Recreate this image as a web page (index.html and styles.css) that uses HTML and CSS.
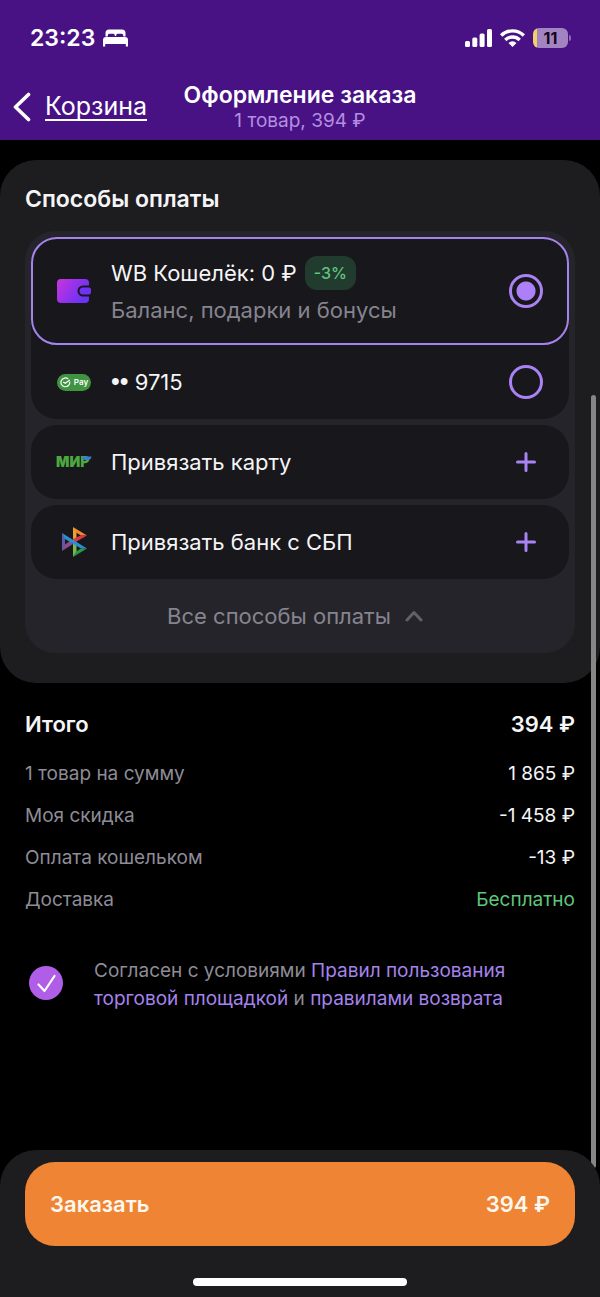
FILE: index.html
```html
<!DOCTYPE html>
<html lang="ru">
<head>
<meta charset="utf-8">
<meta name="viewport" content="width=device-width, initial-scale=1">
<title>Оформление заказа</title>
<link rel="stylesheet" href="styles.css">
</head>
<body>
<div class="screen">
  <header class="header">
    <div class="status">
      <div class="status-left">
        <span>23:23</span>
        <svg width="25" height="18" viewBox="0 0 25 18" fill="#fff" aria-hidden="true">
          <path d="M2.500 7.500V4A3.500 3.500 0 0 1 6 .5h13A3.500 3.500 0 0 1 22.500 4v3.500h-2.300V6.300a1.500 1.500 0 0 0-1.500-1.500h-4a1.500 1.500 0 0 0-1.500 1.500v.7h-1.400v-.7a1.500 1.500 0 0 0-1.500-1.500h-4a1.500 1.500 0 0 0-1.500 1.500v1.200z"/>
          <path d="M3 8h19a3 3 0 0 1 3 3v6.500h-2.200V15H2.200v2.500H0V11a3 3 0 0 1 3-3z"/>
        </svg>
      </div>
      <div class="status-right">
        <svg width="27" height="18" viewBox="0 0 27 18" fill="#fff" aria-hidden="true">
          <rect x="0" y="12" width="5" height="6" rx="1.500"/><rect x="7.300" y="8.500" width="5" height="9.500" rx="1.500"/><rect x="14.600" y="4.500" width="5" height="13.500" rx="1.500"/><rect x="22" y="0" width="5" height="18" rx="1.500"/>
        </svg>
        <svg width="25" height="18" viewBox="0 0 25 18" aria-hidden="true">
          <g fill="none" stroke="#fff" stroke-width="3.400"><path d="M1.200 6.500a16 16 0 0 1 22.600 0"/><path d="M5.300 11a10.200 10.200 0 0 1 14.400 0"/></g>
          <path fill="#fff" d="M12.500 18l-4-4a5.700 5.700 0 0 1 8 0z"/>
        </svg>
        <span class="battery">11</span>
      </div>
    </div>
    <nav class="nav">
      <a class="back" href="#">
        <svg width="18" height="30" viewBox="0 0 18 30" fill="none" stroke="#fff" stroke-width="3.600" stroke-linecap="round" stroke-linejoin="round" aria-hidden="true"><path d="M15.500 2.500 2.500 15l13 12.500"/></svg>
        <span>Корзина</span>
      </a>
      <div class="nav-title">
        <h1>Оформление заказа</h1>
        <p>1 товар, 394 ₽</p>
      </div>
    </nav>
  </header>

  <main class="content">
    <section class="payment">
      <h2>Способы оплаты</h2>
      <div class="methods">
        <div class="card">
          <label class="row row-selected">
            <span class="row-icon">
              <svg width="36" height="26" viewBox="0 0 36 26" aria-hidden="true">
                <defs><linearGradient id="wallet" x1="0" y1="0" x2="1" y2=".5"><stop offset="0" stop-color="#c936dc"/><stop offset=".5" stop-color="#9a32ea"/><stop offset="1" stop-color="#6a32f5"/></linearGradient></defs>
                <rect x="1" y="1" width="32" height="24" rx="4" fill="url(#wallet)"/>
                <path d="M36 7.500H27a5.500 5.500 0 0 0 0 11h9z" fill="#18171c"/>
                <path d="M33 9.500h-6a3.500 3.500 0 0 0 0 7h6a2 2 0 0 0 2-2v-3a2 2 0 0 0-2-2z" fill="#6f32f4"/>
              </svg>
            </span>
            <span class="row-text">
              <span class="row-title">WB Кошелёк: 0 ₽ <span class="badge">-3%</span></span>
              <span class="row-note">Баланс, подарки и бонусы</span>
            </span>
            <input class="radio" type="radio" name="method" checked>
          </label>
          <label class="row">
            <span class="row-icon">
              <span class="pay">
                <svg width="11" height="11" viewBox="0 0 11 11" fill="none" stroke="#fff" stroke-width="1.200" aria-hidden="true"><path d="M9.700 4.700A4.400 4.400 0 1 1 8.300 2.100"/><path d="M3.200 4.900 5.300 6.300 9.800 3"/></svg>
                Pay
              </span>
            </span>
            <span class="row-text"><span class="dots">••</span> 9715</span>
            <input class="radio" type="radio" name="method">
          </label>
        </div>
        <button class="card row" type="button">
          <span class="row-icon">
            <svg width="36" height="20" viewBox="0 0 36 20" aria-hidden="true">
              <text class="mir" x="0" y="15" fill="#4da83f">МИР</text>
              <path d="M26 4.500h9.500a4 4 0 0 1-4 3.500H29a3.500 3.500 0 0 1-3-3.500z" fill="#3b7fd4"/>
            </svg>
          </span>
          <span class="row-text">Привязать карту</span>
          <svg class="plus" width="34" height="34" viewBox="0 0 34 34" aria-hidden="true"><path d="M17 8.500v17M8.500 17h17"/></svg>
        </button>
        <button class="card row" type="button">
          <span class="row-icon">
            <svg width="26" height="32" viewBox="0 0 26 32" aria-hidden="true">
              <path d="M1 7l3 5v8l-3 5z" fill="#6357a5"/>
              <path d="M1 25l11-7-3-3-5 3.500z" fill="#8d4b90"/>
              <path d="M12 1l3.500 4.500V15L12 17z" fill="#efa12e"/>
              <path d="M12 1l14 8.500h-6l-5-3z" fill="#f08a28"/>
              <path d="M26 9.500L12 17.500V13l8-3.800z" fill="#d63a48"/>
              <path d="M12 14l3.500 3v9L12 31z" fill="#79b94a"/>
              <path d="M12 31l14-8.500h-6l-5 3z" fill="#2f9646"/>
              <path d="M1 7l25 15.500h-6L4 13z" fill="#2a8fd0"/>
            </svg>
          </span>
          <span class="row-text">Привязать банк с СБП</span>
          <svg class="plus" width="34" height="34" viewBox="0 0 34 34" aria-hidden="true"><path d="M17 8.500v17M8.500 17h17"/></svg>
        </button>
        <button class="toggle" type="button">
          Все способы оплаты
          <svg width="18" height="12" viewBox="0 0 18 12" fill="none" stroke="#626169" stroke-width="3" stroke-linecap="round" stroke-linejoin="round" aria-hidden="true"><path d="M2 10l7-7.500L16 10"/></svg>
        </button>
      </div>
    </section>

    <section class="totals">
      <h2 class="total"><span>Итого</span><span>394 ₽</span></h2>
      <dl class="lines">
        <div><dt>1 товар на сумму</dt><dd>1&nbsp;865 ₽</dd></div>
        <div><dt>Моя скидка</dt><dd>-1&nbsp;458 ₽</dd></div>
        <div><dt>Оплата кошельком</dt><dd>-13 ₽</dd></div>
        <div><dt>Доставка</dt><dd class="free">Бесплатно</dd></div>
      </dl>
    </section>

    <div class="consent">
      <span class="check">
        <input id="consent" type="checkbox" checked>
        <svg width="34" height="34" viewBox="0 0 34 34" fill="none" stroke="#fff" stroke-width="2.200" stroke-linecap="round" stroke-linejoin="round" aria-hidden="true"><path d="M9.500 18.500l6 6.500 10-15"/></svg>
      </span>
      <label for="consent">Согласен с условиями <a href="#">Правил пользования торговой площадкой</a> и <a href="#">правилами возврата</a></label>
    </div>
    <div class="scrollbar"></div>
  </main>

  <footer class="footer">
    <button class="order" type="button"><span>Заказать</span><span>394 ₽</span></button>
    <div class="home"></div>
  </footer>
</div>
</body>
</html>
```

FILE: styles.css
```css
* { box-sizing: border-box; }

body {
  margin: 0;
  background: #000;
  color: #f5f5f7;
  font-family: Inter, "Noto Sans", sans-serif;
  font-size: 22px;
  line-height: 28px;
}

h1, h2, p, dl, dd { margin: 0; }
h1, h2 { font-size: 23px; font-weight: 600; line-height: 28px; }

button {
  border: 0;
  color: inherit;
  font: inherit;
  text-align: left;
}

.screen {
  display: flex;
  flex-direction: column;
  min-height: 100vh;
}

.header { background: #481285; color: #fff; }

.status {
  display: flex;
  justify-content: space-between;
  padding: 24px 29px 0 30px;
  font-size: 23px;
  font-weight: 600;
}
.status-left, .status-right { display: flex; align-items: center; }
.status-left { gap: 8px; }
.status-right { gap: 8px; }

.battery {
  position: relative;
  width: 35px;
  margin-right: 3px;
  border-radius: 6px;
  background: linear-gradient(90deg, #f3cf6a 4px, #a384c3 4px);
  color: #120619;
  font-size: 16px;
  font-weight: 700;
  line-height: 20px;
  text-align: center;
}
.battery::after {
  content: "";
  position: absolute;
  top: 7px;
  right: -3px;
  width: 2px;
  height: 6px;
  border-radius: 0 2px 2px 0;
  background: #8f6bb5;
}

.nav {
  display: grid;
  grid-template-columns: 1fr auto 1fr;
  align-items: center;
  padding: 29px 13px 7px;
}
.back {
  display: flex;
  align-items: center;
  gap: 14px;
  color: #fff;
  font-size: 25px;
  text-decoration: none;
}
.back span {
  border-bottom: 2px solid #fff;
  line-height: 26px;
}
.nav-title { text-align: center; }
.nav-title p {
  color: #b58ee0;
  font-size: 19px;
  line-height: 24px;
}

.content {
  position: relative;
  flex: 1;
  padding-top: 20px;
}

.payment {
  padding: 25px 25px 30px;
  border-radius: 36px;
  background: #1d1d1f;
}
.methods {
  display: grid;
  gap: 6px;
  margin-top: 18px;
  padding: 6px 6px 0;
  border-radius: 30px;
  background: #25242a;
}
.card {
  border-radius: 26px;
  background: #18171c;
}
.row {
  display: flex;
  align-items: center;
  width: 100%;
  min-height: 74px;
  padding: 0 26px 0 25px;
}
.row-selected {
  min-height: 108px;
  padding: 0 24px 0 23px;
  border: 2px solid #a583ec;
  border-radius: 26px;
}
.row-icon {
  display: flex;
  justify-content: center;
  width: 36px;
  margin-right: 19px;
}
.row-text { flex: 1; }
.row-title {
  display: flex;
  align-items: center;
  gap: 8px;
  line-height: 34px;
}
.row-note {
  display: block;
  margin: 6px 0 2px;
  color: #86848f;
}
.badge {
  padding: 0 9px;
  border-radius: 12px;
  background: #213b2f;
  color: #5fc67c;
  font-size: 16px;
  font-weight: 500;
}
.dots { font-family: "Liberation Sans", sans-serif; font-size: 25px; line-height: 20px; }

.radio {
  appearance: none;
  width: 34px;
  height: 34px;
  margin: 0;
  border: 3px solid #a982f4;
  border-radius: 50%;
}
.radio:checked { background: radial-gradient(circle, #ad7ff8 9px, transparent 10px); }

.pay {
  display: flex;
  align-items: center;
  justify-content: center;
  gap: 3px;
  width: 34px;
  border-radius: 9px;
  background: #3f9442;
  color: #fff;
  font-size: 8px;
  font-weight: 600;
  line-height: 17px;
}
.mir { font-size: 14px; font-weight: 900; }
.plus { fill: none; stroke: #a982f4; stroke-width: 3; stroke-linecap: round; }

.toggle {
  display: flex;
  align-items: center;
  justify-content: center;
  gap: 14px;
  min-height: 74px;
  margin-top: -6px;
  padding: 0 10px 0 0;
  background: none;
  color: #86848f;
}

.totals { padding: 27px 25px 0; }
.total, .lines div { display: flex; justify-content: space-between; }
.total { font-size: 22px; }
.lines {
  display: grid;
  gap: 18px;
  padding-top: 24px;
  font-size: 19px;
  line-height: 24px;
}
.lines dt { color: #8e8c96; }
.lines .free { color: #5fc67c; }

.consent {
  display: flex;
  align-items: flex-start;
  gap: 31px;
  padding: 45px 60px 137px 29px;
  color: #8e8c96;
  font-size: 19px;
}
.consent a { color: #a583ec; text-decoration: none; }
.check { display: grid; flex: none; padding-top: 9px; }
.check > * { grid-area: 1 / 1; }
.check svg { pointer-events: none; }
.check input {
  appearance: none;
  width: 34px;
  height: 34px;
  margin: 0;
  border-radius: 50%;
  background: #b05ee8;
}

.scrollbar {
  position: absolute;
  top: 255px;
  right: 4px;
  bottom: -18px;
  width: 5px;
  border-radius: 3px;
  background: #868686;
}

.footer {
  position: relative;
  padding: 12px 25px 11px;
  border-radius: 36px 36px 0 0;
  background: #1d1d1f;
}
.order {
  display: flex;
  align-items: center;
  justify-content: space-between;
  width: 100%;
  min-height: 84px;
  padding: 0 25px;
  border-radius: 30px;
  background: #ee8434;
  color: #fff8ee;
  font-weight: 600;
}
.home {
  width: 214px;
  height: 8px;
  margin: 32px auto 0;
  border-radius: 4px;
  background: #fff;
}
```
